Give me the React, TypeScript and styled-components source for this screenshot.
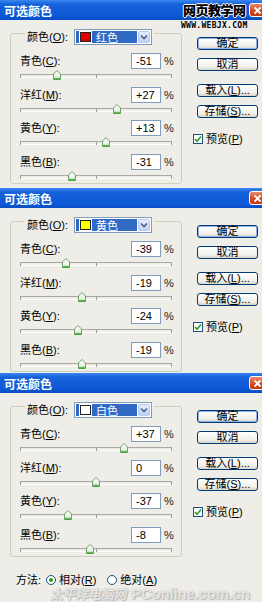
import React from "react";
import styled, { createGlobalStyle } from "styled-components";

const Global = createGlobalStyle`
  html, body { margin: 0; padding: 0; background: #ffffff; }
  body {
    width: 262px; height: 602px; overflow: hidden;
    font-family: "Liberation Sans", "Noto Sans CJK SC", sans-serif;
    font-size: 11px; color: #000;
  }
  * { box-sizing: border-box; }
`;

const Page = styled.div`
  width: 262px;
  height: 602px;
  display: flex;
  flex-direction: column;
  overflow: hidden;
`;

const Dialog = styled.section<{ $h: number }>`
  position: relative;
  flex: none;
  height: ${(p) => p.$h}px;
  display: flex;
  flex-direction: column;
  background: #eeede8;
  overflow: hidden;
`;

const TitleBar = styled.header`
  flex: none;
  height: 20px;
  display: flex;
  align-items: center;
  padding-left: 4px;
  background: linear-gradient(#3b87f2 0%, #1763dc 20%, #0c58d6 80%, #0a4cc4 100%);
  color: #fff;
  font-weight: bold;
  font-size: 12px;
  font-family: "Noto Sans CJK SC", sans-serif;
  overflow: hidden;
`;

const CloseBtn = styled.div`
  margin-left: auto;
  margin-right: -4px;
  width: 17px;
  height: 14px;
  border: 1px solid #fff;
  border-radius: 3px;
  background: linear-gradient(#e88b6a, #d6451c 60%, #c23a14);
  display: flex;
  align-items: center;
  justify-content: center;
`;

const Body = styled.div`
  flex: 1;
  display: flex;
  padding: 1px 0 0 10px;
`;

const LeftCol = styled.div`
  display: flex;
  flex-direction: column;
  width: 172px;
`;

const Group = styled.fieldset`
  margin: 0;
  padding: 0 0 1px 0;
  width: 172px;
  border: 1px solid #d0d0bf;
  border-radius: 3px;
`;

const Legend = styled.legend`
  margin-left: 14px;
  padding: 8px 2px 0 2px;
  display: flex;
  align-items: center;
  gap: 6px;
`;

const Label = styled.span`
  white-space: nowrap;
  font-size: 11px;
  line-height: 14px;
`;

const Combo = styled.div`
  width: 78px;
  height: 16px;
  display: flex;
  border: 1px solid #7f9db9;
  background: #fff;
  padding: 1px;
  gap: 1px;
`;

const ComboValue = styled.div`
  flex: 1;
  display: flex;
  align-items: center;
  gap: 5px;
  padding-left: 4px;
  background: #316ac5;
  color: #fff;
  font-size: 11px;
`;

const Swatch = styled.span<{ $c: string }>`
  width: 11px;
  height: 10px;
  background: ${(p) => p.$c};
  border: 1px solid #222;
  outline: 1px solid #fff;
`;

const ComboArrow = styled.div`
  width: 12px;
  display: flex;
  align-items: center;
  justify-content: center;
  border-radius: 2px;
  background: linear-gradient(#e4ecfd, #c0d2f8);
  border: 1px solid #b5c8f0;
`;

const Rows = styled.div`
  display: flex;
  flex-direction: column;
  gap: 5.5px;
  padding: 8px 9px 0 9px;
`;

const Row = styled.div`
  display: grid;
  grid-template-columns: 1fr 30px 8px;
  grid-template-rows: 16px 12px;
  column-gap: 3px;
  align-items: center;
`;

const NumBox = styled.div`
  height: 16px;
  border: 1px solid #7f9db9;
  background: #fff;
  padding-left: 4px;
  display: flex;
  align-items: center;
  font-size: 11px;
`;

const Pct = styled.span`
  font-size: 11px;
  white-space: nowrap;
  color: #222;
`;

const Track = styled.div`
  grid-column: 1 / -1;
  position: relative;
  height: 12px;
  align-self: stretch;
  &::before {
    content: "";
    position: absolute;
    left: 0;
    right: 0;
    top: 5px;
    height: 2px;
    border-top: 1px solid #a8a8a0;
    border-bottom: 1px solid #ffffff;
  }
`;

const Tick = styled.span<{ $at: number }>`
  position: absolute;
  top: 6px;
  width: 1px;
  height: 3px;
  background: #9a9a92;
  left: ${(p) => p.$at}%;
`;

const Thumb = styled.svg`
  position: absolute;
  top: 1px;
  width: 8px;
  height: 10px;
  margin-left: -4px;
`;

const RightCol = styled.div`
  display: flex;
  flex-direction: column;
  align-items: flex-start;
  margin-left: 15px;
  padding-top: 16px;
`;

const Btn = styled.div<{ $def?: boolean; $mt: number }>`
  width: 61px;
  height: 13px;
  margin-top: ${(p) => p.$mt}px;
  border: 1px solid #003c74;
  border-radius: 3px;
  background: linear-gradient(#ffffff, #f0efea 70%, #d8d4ca);
  box-shadow: ${(p) => (p.$def ? "inset 0 0 0 1px #8fb0e8" : "none")};
  display: flex;
  align-items: center;
  justify-content: center;
  font-size: 11px;
  line-height: 11px;
  white-space: nowrap;
`;

const CheckRow = styled.div`
  margin-top: 14px;
  margin-left: -4px;
  display: flex;
  align-items: center;
  gap: 3px;
`;

const CheckBox = styled.span`
  width: 10px;
  height: 10px;
  border: 1px solid #1c5180;
  background: #fff;
  display: flex;
  align-items: center;
  justify-content: center;
`;

const MethodRow = styled.div`
  margin-top: 16px;
  margin-left: 6px;
  display: flex;
  align-items: center;
  gap: 3px;
`;

const Radio = styled.span<{ $on?: boolean }>`
  width: 10px;
  height: 10px;
  border-radius: 50%;
  border: 1px solid #1c5180;
  background: #fff;
  display: flex;
  align-items: center;
  justify-content: center;
  margin-left: ${(p) => (p.$on ? 2 : 8)}px;
  &::after {
    content: "";
    display: ${(p) => (p.$on ? "block" : "none")};
    width: 4px;
    height: 4px;
    border-radius: 50%;
    background: #21a121;
  }
`;

const TopMark = styled.div`
  position: absolute;
  top: 3px;
  left: 181px;
  display: flex;
  flex-direction: column;
  align-items: center;
  pointer-events: none;
`;

const TopMarkCn = styled.span`
  font-family: "Noto Sans CJK SC", sans-serif;
  font-weight: 900;
  font-size: 13px;
  line-height: 14px;
  color: #000;
  letter-spacing: -0.5px;
  text-shadow: 1px 0 #fff, -1px 0 #fff, 0 1px #fff, 0 -1px #fff;
`;

const TopMarkEn = styled.span`
  margin-top: 5px;
  font-family: "DejaVu Sans Mono", monospace;
  font-weight: bold;
  font-size: 8px;
  line-height: 8px;
  letter-spacing: 0.3px;
  color: #000;
`;

const BottomMark = styled.div`
  position: absolute;
  left: 50px;
  bottom: 0px;
  display: flex;
  align-items: baseline;
  gap: 5px;
  white-space: nowrap;
  pointer-events: none;
  color: rgba(255, 255, 255, 0.75);
  text-shadow: 0 0 1px rgba(110, 110, 110, 0.6), 1px 1px 1px rgba(140, 140, 140, 0.5);
`;

const BottomMarkCn = styled.span`
  font-family: "Noto Sans CJK SC", sans-serif;
  font-size: 13px;
  line-height: 17px;
  font-weight: bold;
  font-style: italic;
  letter-spacing: -0.3px;
`;

const BottomMarkEn = styled.span`
  font-family: "Liberation Sans", sans-serif;
  font-size: 15px;
  line-height: 17px;
  font-weight: bold;
  letter-spacing: -0.2px;
`;

type Chan = { name: string; key: string; value: number };

const Chevron = () => (
  <svg width="8" height="6" viewBox="0 0 8 6">
    <path d="M1 1.5 L4 4.5 L7 1.5" stroke="#4d6185" strokeWidth="1.6" fill="none" />
  </svg>
);

const CloseX = () => (
  <svg width="9" height="9" viewBox="0 0 9 9">
    <path d="M1.5 1.5 L7.5 7.5 M7.5 1.5 L1.5 7.5" stroke="#fff" strokeWidth="1.8" />
  </svg>
);

const SliderThumb = ({ v }: { v: number }) => (
  <Thumb viewBox="0 0 8 10" style={{ left: `${((v + 100) / 200) * 100}%` }}>
    <defs>
      <linearGradient id="tg" x1="0" y1="0" x2="0" y2="1">
        <stop offset="0" stopColor="#ffffff" />
        <stop offset="0.7" stopColor="#e4f2dc" />
        <stop offset="1" stopColor="#7cc47a" />
      </linearGradient>
    </defs>
    <path d="M0.5 4 L4 0.5 L7.5 4 L7.5 9.5 L0.5 9.5 Z" fill="url(#tg)" stroke="#6f9f6c" strokeWidth="1" />
    <path d="M1 9 L7 9" stroke="#2fa52c" strokeWidth="1.2" />
  </Thumb>
);

const fmt = (v: number) => (v > 0 ? `+${v}` : `${v}`);

const ChanRow = ({ c }: { c: Chan }) => (
  <Row>
    <Label>
      {c.name}(<u>{c.key}</u>):
    </Label>
    <NumBox>{fmt(c.value)}</NumBox>
    <Pct>%</Pct>
    <Track>
      <Tick $at={0} />
      <Tick $at={50} />
      <Tick $at={99.4} />
      <SliderThumb v={c.value} />
    </Track>
  </Row>
);

type Cfg = {
  h: number;
  swatch: string;
  colorName: string;
  vals: [number, number, number, number];
  topMark?: boolean;
  method?: boolean;
};

const SelectiveColor = ({ cfg }: { cfg: Cfg }) => {
  const chans: Chan[] = [
    { name: "青色", key: "C", value: cfg.vals[0] },
    { name: "洋红", key: "M", value: cfg.vals[1] },
    { name: "黄色", key: "Y", value: cfg.vals[2] },
    { name: "黑色", key: "B", value: cfg.vals[3] },
  ];
  return (
    <Dialog $h={cfg.h}>
      <TitleBar>
        可选颜色
        <CloseBtn>
          <CloseX />
        </CloseBtn>
      </TitleBar>
      <Body>
        <LeftCol>
          <Group>
            <Legend>
              <Label>
                颜色(<u>O</u>):
              </Label>
              <Combo>
                <ComboValue>
                  <Swatch $c={cfg.swatch} />
                  {cfg.colorName}
                </ComboValue>
                <ComboArrow>
                  <Chevron />
                </ComboArrow>
              </Combo>
            </Legend>
            <Rows>
              {chans.map((c) => (
                <ChanRow key={c.key} c={c} />
              ))}
            </Rows>
          </Group>
          {cfg.method && (
            <MethodRow>
              <Label>方法:</Label>
              <Radio $on />
              <Label>
                相对(<u>R</u>)
              </Label>
              <Radio />
              <Label>
                绝对(<u>A</u>)
              </Label>
            </MethodRow>
          )}
        </LeftCol>
        <RightCol>
          <Btn $def $mt={0}>确定</Btn>
          <Btn $mt={8}>取消</Btn>
          <Btn $mt={13}>
            载入(<u>L</u>)...
          </Btn>
          <Btn $mt={8}>
            存储(<u>S</u>)...
          </Btn>
          <CheckRow>
            <CheckBox>
              <svg width="8" height="8" viewBox="0 0 8 8">
                <path d="M1 4 L3 6.2 L7 1.5" stroke="#21a121" strokeWidth="1.6" fill="none" />
              </svg>
            </CheckBox>
            <Label>
              预览(<u>P</u>)
            </Label>
          </CheckRow>
        </RightCol>
      </Body>
      {cfg.topMark && (
        <TopMark>
          <TopMarkCn>网页教学网</TopMarkCn>
          <TopMarkEn>WWW.WEBJX.COM</TopMarkEn>
        </TopMark>
      )}
      {cfg.method && (
        <BottomMark>
          <BottomMarkCn>太平洋电脑网</BottomMarkCn>
          <BottomMarkEn>PConline.com.cn</BottomMarkEn>
        </BottomMark>
      )}
    </Dialog>
  );
};

const dialogs: Cfg[] = [
  { h: 188, swatch: "#e00000", colorName: "红色", vals: [-51, 27, 13, -31], topMark: true },
  { h: 185, swatch: "#ffff00", colorName: "黄色", vals: [-39, -19, -24, -19] },
  { h: 229, swatch: "#ffffff", colorName: "白色", vals: [37, 0, -37, -8], method: true },
];

export default function App() {
  return (
    <>
      <Global />
      <Page>
        {dialogs.map((d, i) => (
          <SelectiveColor key={i} cfg={d} />
        ))}
      </Page>
    </>
  );
}
